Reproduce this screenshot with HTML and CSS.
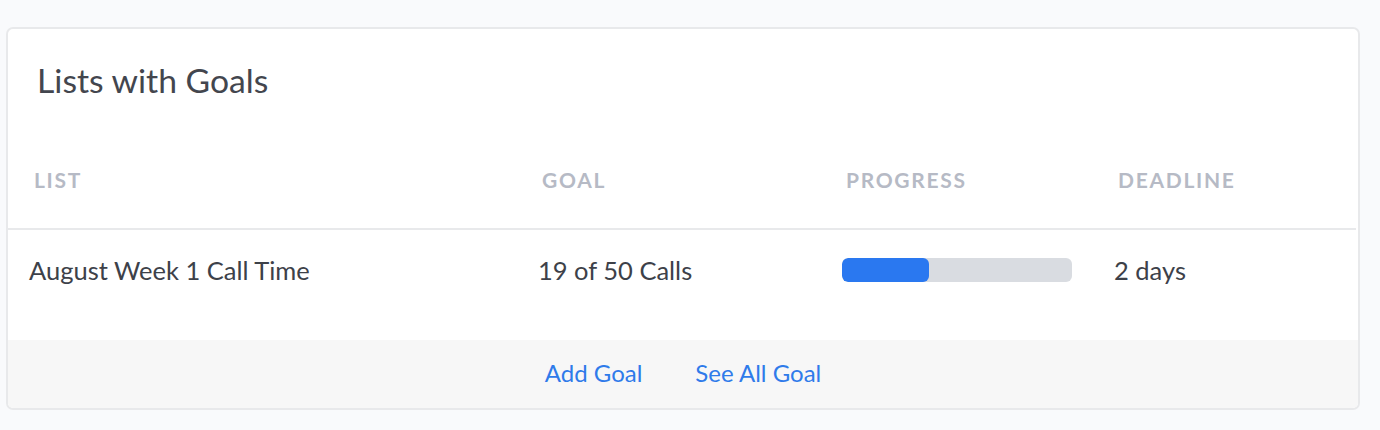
FILE: index.html
```html
<!DOCTYPE html>
<html>
<head>
<meta charset="utf-8">
<link rel="stylesheet" href="styles.css">
</head>
<body>
<div class="card">
  <h2 class="title">Lists with Goals</h2>
  <div class="table">
    <div class="row head">
      <div class="cell c1">LIST</div>
      <div class="cell c2">GOAL</div>
      <div class="cell c3">PROGRESS</div>
      <div class="cell c4">DEADLINE</div>
    </div>
    <div class="row body">
      <div class="cell c1">August Week 1 Call Time</div>
      <div class="cell c2">19 of 50 Calls</div>
      <div class="cell c3"><div class="track"><div class="fill" style="width:38%"></div></div></div>
      <div class="cell c4">2 days</div>
    </div>
  </div>
  <div class="footer">
    <a class="link" href="#">Add Goal</a>
    <a class="link" href="#">See All Goal</a>
  </div>
</div>
</body>
</html>
```
FILE: styles.css
```css
html, body {
  margin: 0;
  padding: 0;
  background: #f9fafc;
}
body {
  padding: 27px 20px 0 6px;
  font-family: Lato, "Open Sans", sans-serif;
}
.card {
  background: #fff;
  border: 2px solid #e8e9eb;
  border-radius: 7px;
  overflow: hidden;
  height: 383px;
  display: flex;
  flex-direction: column;
  box-sizing: border-box;
}
.title {
  margin: 0;
  padding: 31px 0 0 29px;
  height: 64px;
  font-size: 33.7px;
  font-weight: 400;
  color: #43464e;
  line-height: 40px;
}
.table {
  margin-right: 2px;
}
.row {
  display: flex;
}
.head {
  height: 106px;
  align-items: center;
  border-bottom: 2px solid #e8e9eb;
  box-sizing: border-box;
  padding-top: 6px;
}
.head .cell {
  font-size: 21px;
  font-weight: 700;
  letter-spacing: 1.7px;
  color: #b6bac5;
  padding-left: 26px;
}
.body {
  height: 110px;
  align-items: flex-start;
  padding-top: 25px;
  box-sizing: border-box;
}
.body .cell {
  font-size: 25.5px;
  line-height: 30px;
  color: #3d4149;
  padding-left: 22px;
  display: flex;
  align-items: center;
  height: 30px;
}
.body .c1 { padding-left: 21px; }
.cell {
  box-sizing: border-box;
}
.c1 { width: 508px; }
.c2 { width: 304px; }
.c3 { width: 272px; }
.c4 { flex: 1; }
.track {
  width: 230px;
  height: 24px;
  border-radius: 6px;
  background: #d9dce1;
  overflow: hidden;
}
.fill {
  height: 100%;
  background: #2a78f0;
  border-radius: 6px;
}
.footer {
  flex: 1;
  background: #f7f7f7;
  display: flex;
  justify-content: center;
  align-items: center;
  gap: 53px;
  padding-bottom: 3px;
}
.link {
  color: #2f7bea;
  text-decoration: none;
  font-size: 24px;
}
```
